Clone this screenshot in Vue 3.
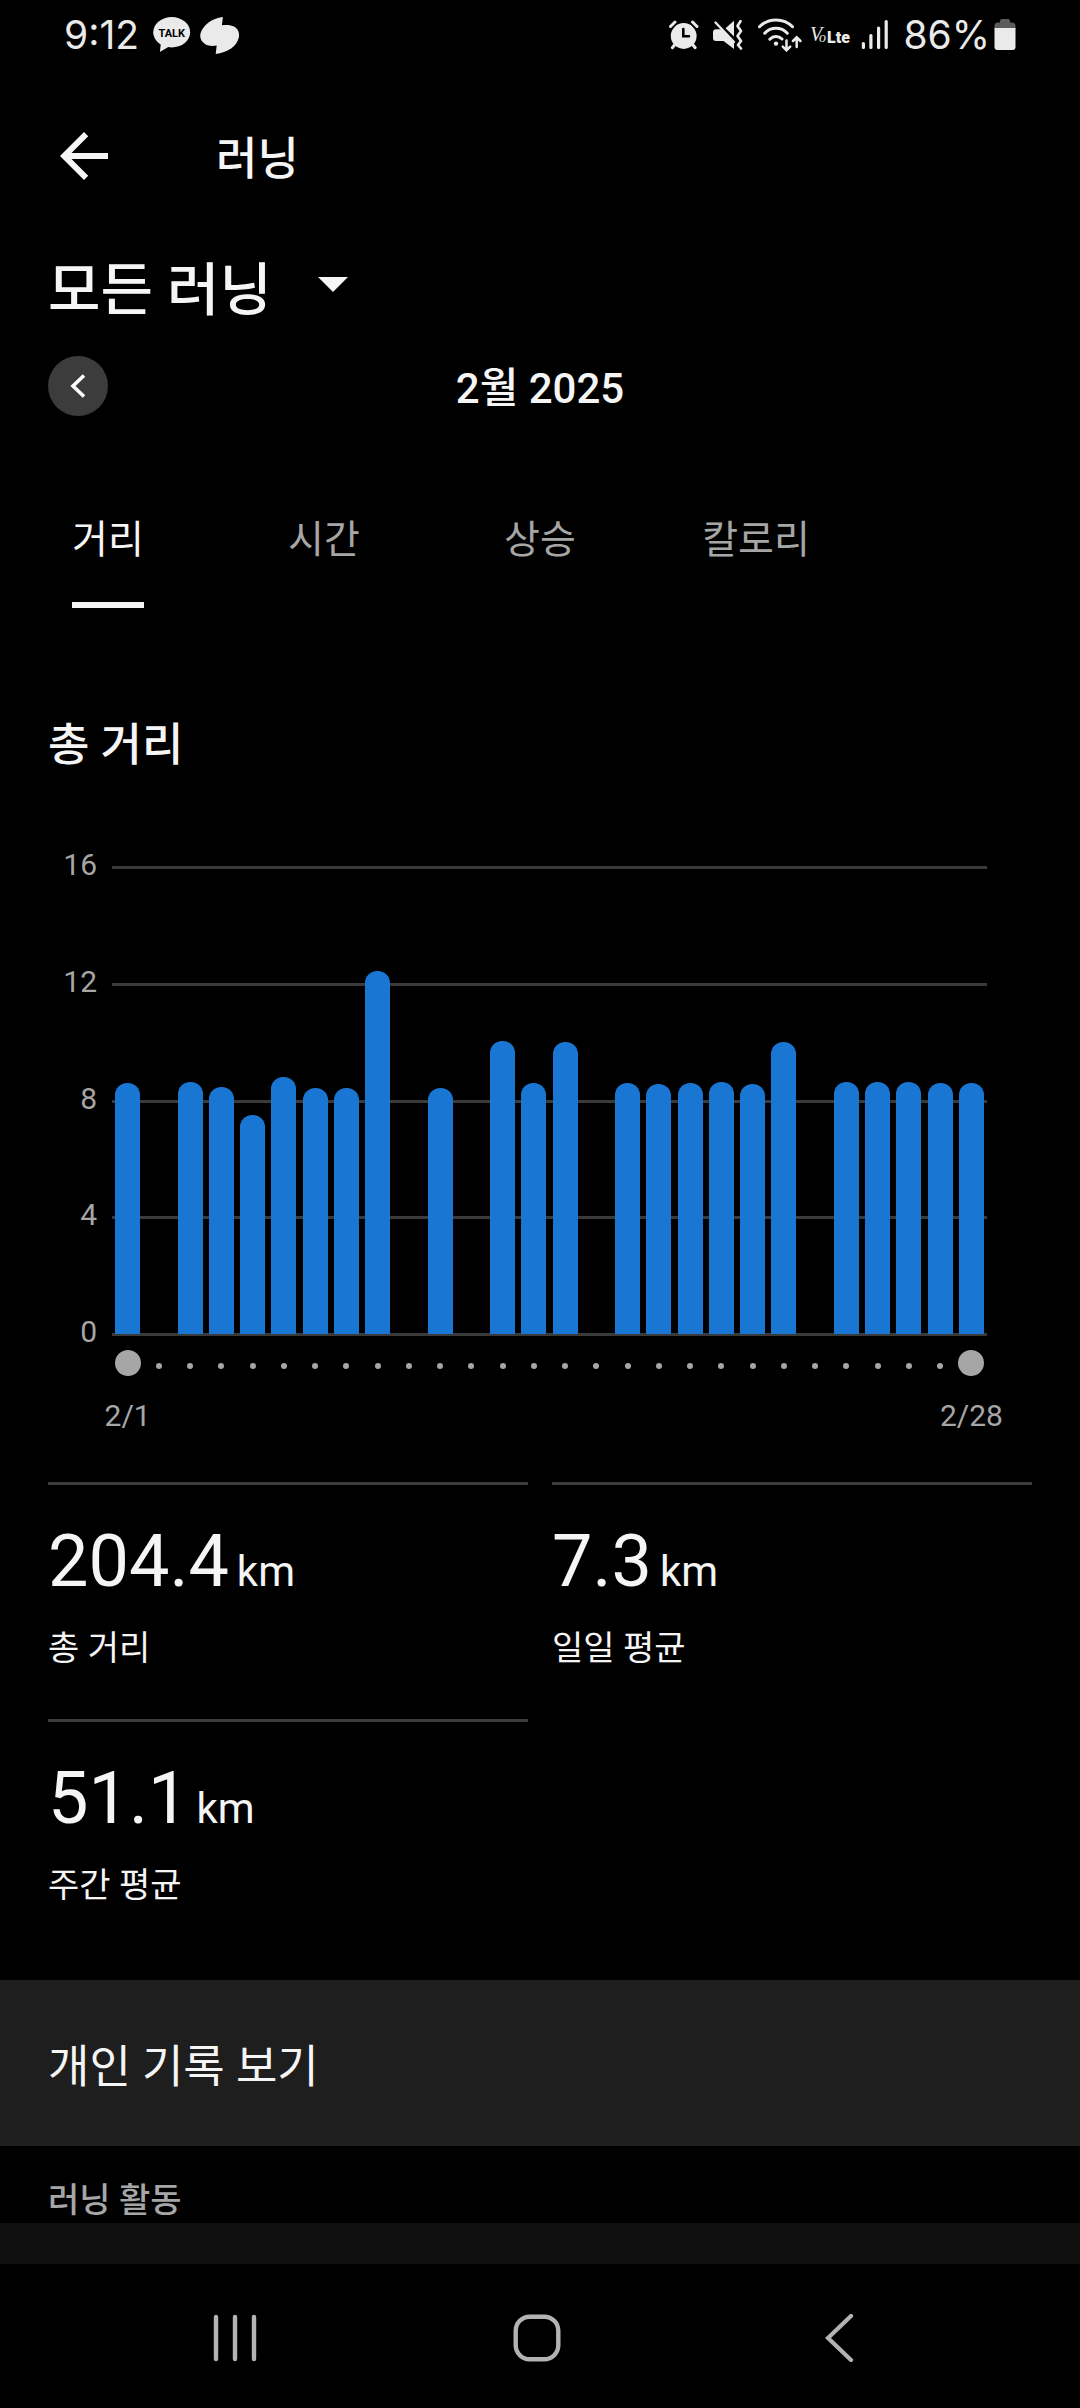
<template>
  <div class="screen">
    <header class="status-bar">
      <div class="status-group status-left">
        <span class="status-text">9:12</span>
        <svg width="38" height="36" viewBox="0 0 38 36">
          <ellipse cx="18.7" cy="15.3" rx="18.5" ry="15.2" fill="#eaeaea" />
          <path d="M8 25L6.9 35L17 29z" fill="#eaeaea" />
          <text x="18.7" y="19.6" text-anchor="middle" class="talk-text">TALK</text>
        </svg>
        <svg width="40" height="37" viewBox="0 0 40 37" fill="#eaeaea">
          <path d="M22.9 0L21.9 8.3C27 7.6 31 7.9 34 9.6C38 12 40 16 38.7 21C36.5 29.5 27.5 35.5 15.7 37L16.7 28.6C12.5 29.3 8 29 5 27C1 24.500-.8 20 .8 15.5C3.5 8 11.5 1.5 22.9 0z" />
        </svg>
      </div>

      <div class="status-group status-right">
        <svg width="30" height="30" viewBox="0 0 30 30" fill="none" stroke-linecap="round">
          <circle cx="14.7" cy="16" r="12.9" fill="#eaeaea" />
          <path d="M1.5 6.5L6 2M28 6.5L23.5 2" stroke="#eaeaea" stroke-width="3" />
          <path d="M5.5 25L3.3 27.7M24 25L26.2 27.7" stroke="#eaeaea" stroke-width="3" />
          <path d="M14.3 9V16.3H20" stroke="#000" stroke-width="2.6" />
        </svg>
        <svg width="31" height="30" viewBox="0 0 31 30">
          <path d="M3 9.3H8L21 21.5V29L10.5 21H3a3 3 0 0 1-3-3V12.300a3 3 0 0 1 3-3z" fill="#eaeaea" />
          <path d="M12.5 8.2L21 .8V16.6z" fill="#eaeaea" />
          <path d="M2.5 2.5L21 22" stroke="#eaeaea" stroke-width="2.4" stroke-linecap="round" />
          <path d="M27.5 1.2L24.5 6L28 11L24.5 16L28 21L25 25L28 28.5" fill="none" stroke="#eaeaea" stroke-width="2.6" stroke-linecap="round" stroke-linejoin="round" />
        </svg>
        <svg width="45" height="34" viewBox="0 0 45 34" fill="none" stroke="#eaeaea" stroke-linecap="round">
          <path d="M1.5 8.700C10.500-.4 25.500-.4 34.5 8.700M6.7 15.2C13 8.7 23 8.7 29.3 15.2M11.8 21.2C15.3 17.5 20.5 17.5 24 21" stroke-width="3" />
          <circle cx="18" cy="25.6" r="2.2" fill="#eaeaea" stroke="none" />
          <path d="M28.5 22.5V32M24.8 28.6L28.5 32.3L32.2 28.6M38.7 29V19.5M35 23L38.7 19.3L42.4 23" stroke-width="2.5" />
        </svg>
        <svg class="lte-icon" width="42" height="24" viewBox="0 0 42 24" fill="#eaeaea">
          <text x="1" y="18" class="lte-script">V</text>
          <text x="10" y="19" class="lte-small">o</text>
          <text x="18" y="20" class="lte-bold">Lte</text>
        </svg>
        <svg class="signal-icon" width="28" height="30" viewBox="0 0 28 30" fill="#eaeaea">
          <rect x=".8" y="22" width="3.2" height="7" rx="1.5" />
          <rect x="8.3" y="14" width="3.2" height="15" rx="1.5" />
          <rect x="16" y="6.6" width="3.2" height="22.4" rx="1.5" />
          <rect x="23.6" y="0" width="3.2" height="29" rx="1.5" />
        </svg>
        <span class="battery">
          <span class="status-text">86%</span>
          <svg width="22" height="32" viewBox="0 0 22 32">
            <path d="M6 2a2 2 0 0 1 2-2h6a2 2 0 0 1 2 2v1.5h2a3.5 3.5 0 0 1 3.5 3.5v3H.5V7a3.5 3.5 0 0 1 3.5-3.5h2z" fill="#5c5c5c" />
            <path d="M.5 9h21v19a3 3 0 0 1-3 3h-15a3 3 0 0 1-3-3z" fill="#eaeaea" />
          </svg>
        </span>
      </div>
    </header>

    <div class="app-bar">
      <button type="button" aria-label="뒤로">
        <svg width="72" height="72" viewBox="0 0 24 24" fill="#f5f5f5">
          <path d="M20 11H7.83l5.59-5.59L12 4l-8 8 8 8 1.41-1.41L7.83 13H20v-2z" />
        </svg>
      </button>
      <h1>러닝</h1>
    </div>

    <main>
      <label class="filter">
        <select v-model="filter" aria-label="활동 필터">
          <option value="all">모든 러닝</option>
        </select>
        <svg width="30" height="15" viewBox="0 0 30 15" fill="#f5f5f5">
          <path d="M0 0H30L15 15z" />
        </svg>
      </label>

      <div class="period">
        <button type="button" class="prev-button" aria-label="이전 달">
          <svg width="16" height="24" viewBox="0 0 16 24" fill="none" stroke="#fff" stroke-width="3.6">
            <path d="M14 1.5L3 12L14 22.5" />
          </svg>
        </button>
        <span class="period-label">2월 2025</span>
      </div>

      <nav class="tabs">
        <button
          v-for="tab in tabs"
          :key="tab"
          type="button"
          class="tab"
          :class="{ active: tab === activeTab }"
          @click="activeTab = tab"
        >
          {{ tab }}
        </button>
      </nav>

      <h2>총 거리</h2>

      <section class="chart">
        <ul class="y-axis">
          <li v-for="n in yLabels" :key="n">{{ n }}</li>
        </ul>
        <div class="plot">
          <div class="grid-lines">
            <i v-for="n in yLabels" :key="n"></i>
          </div>
          <div class="bars">
            <div v-for="(km, i) in days" :key="i" class="bar-slot">
              <div v-if="km" class="bar" :style="{ height: (km / maxKm) * 100 + '%' }"></div>
            </div>
          </div>
        </div>
        <div class="x-axis">
          <div class="dots">
            <span v-for="(km, i) in days" :key="i" class="dot" :class="{ big: isEdge(i) }"></span>
          </div>
          <div class="dates">
            <span v-for="(km, i) in days" :key="i" class="date">{{ isEdge(i) ? `2/${i + 1}` : '' }}</span>
          </div>
        </div>
      </section>

      <section class="stats">
        <div v-for="stat in stats" :key="stat.label" class="stat">
          <div class="stat-value">{{ stat.value }}<span class="unit">km</span></div>
          <div class="stat-label">{{ stat.label }}</div>
        </div>
      </section>

      <button type="button" class="records">개인 기록 보기</button>

      <h3>러닝 활동</h3>
      <div class="activity-list"></div>
    </main>

    <footer class="nav-bar">
      <button type="button" aria-label="최근 앱">
        <svg width="48" height="48" viewBox="0 0 48 48" stroke="#b3b3b3" stroke-width="4.4" stroke-linecap="round">
          <path d="M5 3V45M24 3V45M43 3V45" />
        </svg>
      </button>
      <button type="button" aria-label="홈">
        <svg width="48" height="48" viewBox="0 0 48 48" fill="none" stroke="#b3b3b3" stroke-width="4.4">
          <rect x="2.700" y="2.700" width="42.600" height="42.600" rx="14" />
        </svg>
      </button>
      <button type="button" aria-label="뒤로 가기">
        <svg width="48" height="48" viewBox="0 0 48 48" fill="none" stroke="#b3b3b3" stroke-width="4.2" stroke-linecap="round">
          <path d="M36 2L13 24L36 46" />
        </svg>
      </button>
    </footer>
  </div>
</template>

<script setup>
import { ref } from 'vue'

const filter = ref('all')

const tabs = ['거리', '시간', '상승', '칼로리']
const activeTab = ref('거리')

const maxKm = 16
const yLabels = [16, 12, 8, 4, 0]

// Kilómetros por día, 0 = sin actividad
const days = [
  8.6, 0, 8.63, 8.46, 7.5, 8.8, 8.43,
  8.43, 12.44, 0, 8.43, 0, 10.04, 8.6,
  10, 0, 8.6, 8.56, 8.6, 8.63, 8.56,
  10, 0, 8.63, 8.63, 8.63, 8.6, 8.6
]

const isEdge = (i) => i === 0 || i === days.length - 1

const stats = [
  { value: '204.4', label: '총 거리' },
  { value: '7.3', label: '일일 평균' },
  { value: '51.1', label: '주간 평균' }
]
</script>

<style>
body {
  margin: 0;
  background: #000;
}
</style>

<style scoped>
.screen {
  min-height: 100vh;
  display: flex;
  flex-direction: column;
  background: #000;
  color: #f5f5f5;
  font-family: Roboto, 'Noto Sans CJK KR', sans-serif;
}

button,
select {
  appearance: none;
  background: none;
  border: none;
  padding: 0;
  margin: 0;
  color: inherit;
  font: inherit;
  cursor: pointer;
}

svg {
  display: block;
  flex: none;
}

h1,
h2,
h3,
ul {
  margin: 0;
  padding: 0;
  font-weight: 500;
  list-style: none;
}

/* Barra de estado */
.status-bar {
  height: 72px;
  padding: 0 64px;
  box-sizing: border-box;
  display: flex;
  justify-content: space-between;
  align-items: flex-start;
  color: #eaeaea;
}

.status-group {
  height: 70px;
  display: flex;
  align-items: center;
}

.status-left {
  gap: 9px;
}

.status-right {
  gap: 14px;
}

.status-text {
  font-family: Inter, sans-serif;
  font-size: 39px;
  line-height: 48px;
}

.status-left .status-text {
  margin-right: 5px;
}

.lte-icon {
  margin-left: -8px;
}

.signal-icon {
  margin-left: -4px;
}

.battery {
  display: flex;
  align-items: center;
  gap: 4px;
}

.talk-text {
  font: 700 11px Roboto, sans-serif;
  fill: #000;
}

.lte-script {
  font: italic 20px 'Liberation Serif', serif;
}

.lte-small {
  font: italic 14px 'Liberation Serif', serif;
}

.lte-bold {
  font: 900 16px Roboto, sans-serif;
}

/* Cabecera */
.app-bar {
  min-height: 168px;
  padding: 0 48px;
  box-sizing: border-box;
  display: flex;
  align-items: center;
  gap: 96px;
}

h1 {
  padding-top: 8px;
  font-size: 45px;
  line-height: 64px;
}

main {
  flex: 1;
  display: flex;
  flex-direction: column;
}

.filter {
  padding: 6px 48px 4px;
  display: flex;
  align-items: center;
  gap: 46px;
}

.filter select {
  padding-top: 6px;
  font-size: 57px;
  font-weight: 500;
  line-height: 78px;
}

.filter svg {
  margin-bottom: 8px;
}

.period {
  margin-top: 22px;
  padding: 0 48px;
  display: grid;
  grid-template-columns: 60px 1fr 60px;
  align-items: center;
}

.prev-button {
  width: 60px;
  height: 60px;
  border-radius: 50%;
  background: #3c3c3c;
  display: flex;
  align-items: center;
  justify-content: center;
}

.period-label {
  padding-top: 6px;
  text-align: center;
  font-size: 42px;
  font-weight: 500;
  line-height: 54px;
}

.tabs {
  margin-top: 96px;
  display: grid;
  grid-template-columns: repeat(5, 1fr);
  justify-items: center;
}

.tab {
  color: #a6a6a6;
  font-size: 39px;
  line-height: 56px;
  padding-bottom: 34px;
  border-bottom: 6px solid transparent;
}

.tab.active {
  color: #f5f5f5;
  border-bottom-color: #f5f5f5;
}

h2 {
  margin-top: 106px;
  padding: 0 48px;
  font-size: 45px;
  line-height: 64px;
}

/* Gráfico */
.chart {
  margin: 88px 93px 0 48px;
  display: grid;
  grid-template-columns: 49px 1fr;
  column-gap: 15px;
  color: #a6a6a6;
  font-size: 30px;
}

.y-axis {
  margin: -3px 0 3px;
  display: flex;
  flex-direction: column;
  justify-content: space-between;
  font-weight: 400;
}

.y-axis li {
  height: 3px;
  display: flex;
  align-items: center;
  justify-content: flex-end;
}

.plot {
  display: grid;
  height: 470px;
}

.grid-lines,
.bars {
  grid-area: 1 / 1;
}

.grid-lines {
  display: flex;
  flex-direction: column;
  justify-content: space-between;
}

.grid-lines i {
  height: 3px;
  background: #3a3a3a;
}

.bars {
  margin: 1px 0 2px;
}

.bars,
.dots,
.dates {
  display: grid;
  grid-template-columns: repeat(28, minmax(0, 1fr));
}

.bar-slot {
  display: flex;
  align-items: flex-end;
  justify-content: center;
}

.bar {
  width: 80%;
  background: #1976d2;
  border-radius: 12px 12px 0 0;
}

.x-axis {
  grid-column: 2;
}

.dots {
  margin-top: 14px;
  height: 26px;
  align-items: center;
  justify-items: center;
}

.dot {
  width: 6px;
  height: 6px;
  margin-top: 6px;
  border-radius: 50%;
  background: #a6a6a6;
}

.dot.big {
  width: 26px;
  height: 26px;
  margin-top: 0;
}

.dates {
  margin-top: 22px;
}

.date {
  display: flex;
  justify-content: center;
  white-space: nowrap;
  line-height: 36px;
}

/* Resumen */
.stats {
  margin: 48px 48px 24px;
  display: grid;
  grid-template-columns: 1fr 1fr;
  column-gap: 24px;
}

.stat {
  border-top: 3px solid #3c3c3c;
  padding: 35px 0 45px;
}

.stat-value {
  font-size: 72px;
  line-height: 84px;
}

.unit {
  margin-left: 8px;
  font-size: 42px;
  line-height: 42px;
}

.stat-label {
  margin-top: 18px;
  font-size: 34px;
  line-height: 52px;
}

.records {
  padding: 56px 48px 46px;
  background: #1e1e1e;
  text-align: left;
  font-size: 45px;
  line-height: 64px;
}

h3 {
  padding: 31px 48px 0;
  color: #a6a6a6;
  font-size: 34px;
  line-height: 46px;
}

.activity-list {
  flex: 1;
  min-height: 40px;
  background: #101010;
}

.nav-bar {
  padding: 50px 90px 46px 84px;
  display: grid;
  grid-template-columns: repeat(3, 1fr);
  justify-items: center;
}
</style>
